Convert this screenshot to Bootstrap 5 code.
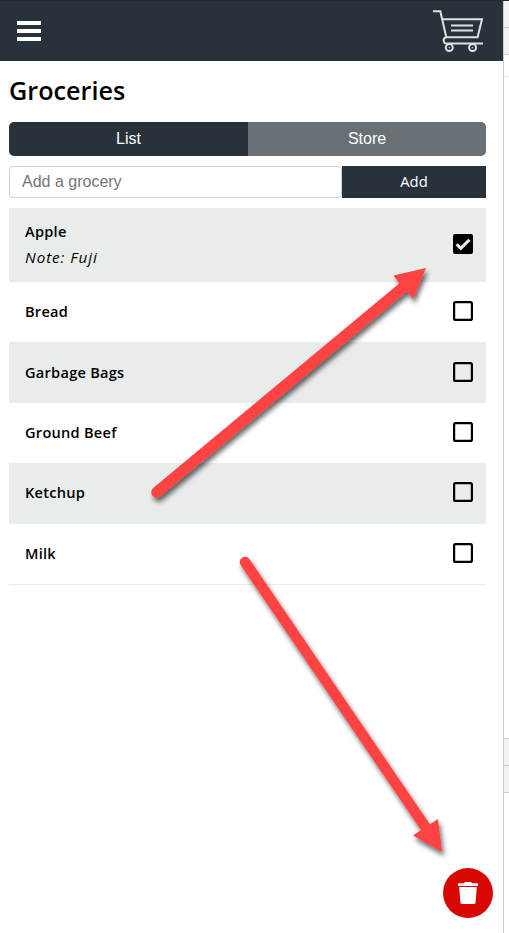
<!DOCTYPE html>
<html lang="en">
<head>
<meta charset="utf-8">
<meta name="viewport" content="width=device-width, initial-scale=1">
<title>Groceries</title>
<link href="https://cdn.jsdelivr.net/npm/bootstrap@5.3.0/dist/css/bootstrap.min.css" rel="stylesheet">
<style>
body{font-family:"Trebuchet MS","Open Sans","Noto Sans",sans-serif;color:#000;height:933px;overflow:hidden;border-top:1px solid #2b2829}
.app-main{width:503px}
.app-bar{height:60px;background:#27323a;padding:0 19px 0 17px}
.bars i{display:block;width:24px;height:4px;background:#fff}
.bars{gap:4px}
.content{padding:0 17px 0 9px}
h1{font-size:25.2px;font-weight:600;line-height:32px;margin:13px 0 16px;letter-spacing:0}
.seg .btn,.add-field{font-family:"Liberation Sans",Arial,sans-serif}
.seg{height:34px}
.seg .btn{font-size:16px;border:0;border-radius:5px;padding:0;color:#fff;background:#697075}
.seg .btn.active{background:#27323a;color:#fff}
.seg .btn:last-child{padding-left:1px}
.add-row{height:32px;margin:10px 0}
.add-field{width:333px;font-size:16px;padding:0 12px;border:1px solid #cfcfd6;border-radius:4px;line-height:30px}
.add-field::placeholder{color:#757575}
.add-btn{background:#27323a;color:#fff;border:0;border-radius:0;font-size:14.8px;padding:0 0 2px;line-height:30px}
.grocery{height:60.4px;border:0;padding:0 13px 2px 16px;background:transparent;color:#000;font-size:14.6px;font-weight:600;line-height:26px;letter-spacing:.25px}
.grocery:nth-child(odd){background:#e8eceb}
.grocery.noted{height:74px}
.grocery em{display:block;font-size:15.2px;font-weight:400;letter-spacing:.95px}
.groceries{border-bottom:1px solid #e8eceb;border-radius:0}
.pane{width:6px;border-left:1px solid #ccc}
.pane div{border-bottom:1px solid #ccc}
.pane .tab{background:#f2f2f2}
.trash{left:443px;top:868px;width:50px;height:50px;background:#d80700;border:0;padding:0}
.arrows{left:0;top:0;pointer-events:none}
</style>
<script src="https://cdn.jsdelivr.net/npm/bootstrap@5.3.0/dist/js/bootstrap.bundle.min.js"></script>
</head>
<body class="position-relative d-flex">
<svg class="d-none">
  <symbol id="box" viewBox="0 0 20 20"><rect x="1.100" y="1.100" width="17.800" height="17.800" rx="1.500" fill="none" stroke="#000" stroke-width="2.200"/></symbol>
</svg>
<div class="app-main flex-shrink-0">
  <header class="app-bar d-flex align-items-center justify-content-between">
    <div class="bars d-flex flex-column" role="button" aria-label="Menu"><i></i><i></i><i></i></div>
    <svg width="52" height="44" viewBox="432 8 52 44" fill="none" stroke="#dfe2e4" stroke-width="2" aria-label="Cart">
      <path d="M433 10.200h7.300l6 26h31.300L482 18.200h-40M446 36.200q-3.200 1.300-2 4.800 .4 1.600 2.500 1.600H483M451 24.400h22M451 29.600h22"/>
      <circle cx="449.300" cy="46.600" r="3.500"/><circle cx="472.600" cy="46.600" r="3.500"/>
      <circle cx="449.300" cy="46.600" r=".4" stroke-width="1"/><circle cx="472.600" cy="46.600" r=".4" stroke-width="1"/>
    </svg>
  </header>
  <main class="content">
    <h1>Groceries</h1>
    <div class="seg btn-group d-flex">
      <button class="btn active w-50">List</button>
      <button class="btn w-50">Store</button>
    </div>
    <div class="add-row d-flex">
      <input class="add-field" placeholder="Add a grocery">
      <button class="btn add-btn flex-fill">Add</button>
    </div>
    <div class="groceries list-group">
      <div class="grocery noted list-group-item d-flex align-items-center justify-content-between">
        <div><span>Apple</span><em>Note: Fuji</em></div>
        <svg width="20" height="20" viewBox="0 0 20 20"><rect width="20" height="20" rx="2"/><path d="M3.600 10.200l4.200 4.200 8.600-8.600" fill="none" stroke="#e8eceb" stroke-width="3"/></svg>
      </div>
      <div class="grocery list-group-item d-flex align-items-center justify-content-between"><span>Bread</span><svg width="20" height="20"><use href="#box"/></svg></div>
      <div class="grocery list-group-item d-flex align-items-center justify-content-between"><span>Garbage Bags</span><svg width="20" height="20"><use href="#box"/></svg></div>
      <div class="grocery list-group-item d-flex align-items-center justify-content-between"><span>Ground Beef</span><svg width="20" height="20"><use href="#box"/></svg></div>
      <div class="grocery list-group-item d-flex align-items-center justify-content-between"><span>Ketchup</span><svg width="20" height="20"><use href="#box"/></svg></div>
      <div class="grocery list-group-item d-flex align-items-center justify-content-between"><span>Milk</span><svg width="20" height="20"><use href="#box"/></svg></div>
    </div>
  </main>
</div>
<aside class="pane d-flex flex-column">
  <div class="tab" style="height:27px"></div>
  <div class="tab" style="height:27px"></div>
  <div style="height:22px;border-color:#eee"></div>
  <div style="height:662px"></div>
  <div class="tab" style="height:27px"></div>
  <div class="tab" style="height:27px"></div>
</aside>
<button class="trash btn rounded-circle position-fixed d-flex align-items-center justify-content-center" aria-label="Delete">
  <svg width="20" height="22" viewBox="458 882 20 22" fill="#fff"><path d="M458 883.300h5.700l1.300-1.300h6l1.300 1.300h5.700v2.700h-20zM459.200 886.900h17.600l-1.200 15.600q-.2 1.500-1.700 1.500h-11.800q-1.500 0-1.700-1.500z"/></svg>
</button>
<svg class="arrows position-fixed" width="509" height="933">
  <defs><filter id="shade" x="-10%" y="-10%" width="120%" height="120%"><feDropShadow dx="2" dy="4" stdDeviation="2.500" flood-color="#000" flood-opacity=".6"/></filter></defs>
  <g fill="#ff4343" stroke="#ff4343" filter="url(#shade)">
    <path d="M156.700 492.300L403 287.500" stroke-width="11" stroke-linecap="round"/>
    <path d="M426 268l-32.500 7.500 6 8 8.200 8.200 5.300 7.300z" stroke="none"/>
  </g>
  <g fill="#ff4343" stroke="#ff4343" filter="url(#shade)">
    <path d="M245 562L426 828" stroke-width="10.500" stroke-linecap="round"/>
    <path d="M442 852l-29-16.500 8-5.500 8.500-5.500 8.500-5.500z" stroke="none"/>
  </g>
</svg>
</body>
</html>
